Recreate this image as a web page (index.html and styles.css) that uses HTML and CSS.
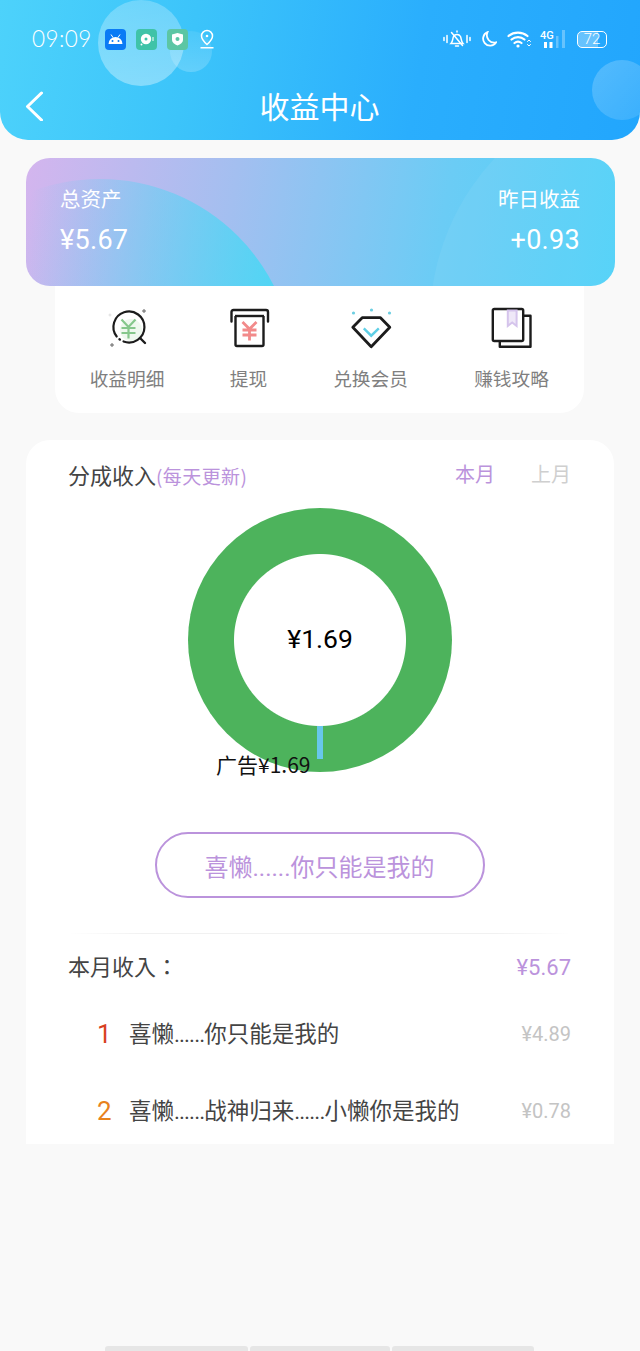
FILE: index.html
```html
<!DOCTYPE html>
<html lang="zh">
<head>
<meta charset="utf-8">
<title>收益中心</title>
<link rel="stylesheet" href="styles.css">
</head>
<body>
<div class="page">
  <header class="header">
    <span class="bubble bubble-a"></span>
    <span class="bubble bubble-b"></span>
    <span class="bubble bubble-c"></span>
    <div class="status">
      <div class="status-left">
        <span class="time">09:09</span>
        <svg class="app" viewBox="0 0 21 21"><rect width="21" height="21" rx="4" fill="#0a7bf5"/><path d="M3.500 15a7 7 0 0 1 14 0z" fill="#fff"/><path d="M6 5.500l2 3M15 5.500l-2 3" stroke="#fff" stroke-width="1"/><circle cx="7.500" cy="12" r="1" fill="#0a7bf5"/><circle cx="13.500" cy="12" r="1" fill="#0a7bf5"/></svg>
        <svg class="app" viewBox="0 0 21 21"><rect width="21" height="21" rx="4" fill="#3fc3a8"/><circle cx="10" cy="10" r="5.200" fill="#fff"/><circle cx="10" cy="10" r="1.500" fill="#3fc3a8"/><circle cx="5.500" cy="15.500" r="1" fill="#fff"/><path d="M17 8v4" stroke="#fff" stroke-width="1"/></svg>
        <svg class="app" viewBox="0 0 21 21"><rect width="21" height="21" rx="4" fill="#5cc6a4"/><path d="M10.500 4l5.500 1.500v5.500c0 2.500-2.500 4.500-5.500 5.500-3-1-5.500-3-5.500-5.500V5.500z" fill="#fff"/><circle cx="10.500" cy="10" r="2" fill="#5cc6a4"/></svg>
        <svg class="pin" viewBox="0 0 16 20" fill="none" stroke="#fff" stroke-width="1.500"><path d="M8 15.500C5 12.800 2.500 10.300 2.500 7a5.500 5.500 0 0 1 11 0c0 3.300-2.500 5.800-5.500 8.500z"/><circle cx="8" cy="7" r="1.300" fill="#fff" stroke="none"/><path d="M1.500 18.800h13"/></svg>
      </div>
      <div class="status-right">
        <svg class="s-bell" viewBox="0 0 28 18" fill="none" stroke="#fff" stroke-width="1.500" stroke-linecap="round"><path d="M8 13.500c2-2 1.500-4.500 2.500-7a4 4 0 0 1 7 0c1 2.500.5 5 2.500 7z"/><path d="M8.500 2.500l11 13"/><path d="M14 1v1M12.500 16h3M1 7.500v3M4 5.500v7M24 5.500v7M27 7.500v3"/></svg>
        <svg class="s-moon" viewBox="0 0 16 16"><path d="M6.500 1.200A7 7 0 1 0 15 11.500 7.500 7.500 0 0 1 6.500 1.200z" fill="none" stroke="#fff" stroke-width="1.800"/></svg>
        <svg class="s-wifi" viewBox="0 0 24 18" fill="none" stroke="#fff" stroke-width="2.200" stroke-linecap="round"><path d="M1.500 6a15 15 0 0 1 19 0M4.500 9.500a10 10 0 0 1 13 0M7.500 13a5.500 5.500 0 0 1 7 0"/><circle cx="11" cy="16" r="1.600" fill="#fff" stroke="none"/><path d="M20.500 11.500l1.500-1.500 1.500 1.500M20.500 14.500l1.500 1.500 1.500-1.500" stroke-width="1"/></svg>
        <div class="s-net">
          <span class="s-4g">4G</span>
          <svg class="s-bars" viewBox="0 0 26 20"><rect x="4" y="13" width="3" height="6" fill="#fff"/><rect x="9.500" y="13" width="3" height="6" fill="#fff"/><rect x="16" y="7" width="2.500" height="12" fill="#fff" fill-opacity=".3"/><rect x="22" y="1" width="3" height="18" fill="#fff" fill-opacity=".3"/></svg>
        </div>
        <div class="s-batt"><span class="s-num">72</span></div>
      </div>
    </div>
    <div class="nav">
      <svg class="back" viewBox="0 0 18 30" fill="none" stroke="#fff" stroke-width="3" stroke-linecap="round" stroke-linejoin="round"><path d="M16.500 2L2.500 15.500l14 13.500"/></svg>
      <h1 class="title">收益中心</h1>
    </div>
  </header>

  <section class="hero">
    <span class="hero-arc-a"></span>
    <span class="hero-arc-b"></span>
    <div class="hero-col">
      <span class="hero-label">总资产</span>
      <span class="hero-value">¥5.67</span>
    </div>
    <div class="hero-col hero-col-right">
      <span class="hero-label">昨日收益</span>
      <span class="hero-value">+0.93</span>
    </div>
  </section>

  <nav class="shortcuts">
    <a class="shortcut">
      <svg class="sc-icon" viewBox="0 0 44 44" fill="none"><circle cx="26" cy="23" r="11" fill="#eef8ee"/><path d="M11.700 29.500A15.500 15.500 0 1 1 18.500 34.500" stroke="#1c1c1c" stroke-width="2.200" stroke-linecap="round"/><path d="M14.500 32.300l.4.300" stroke="#1c1c1c" stroke-width="2.400" stroke-linecap="round"/><path d="M35 31l5 5" stroke="#1c1c1c" stroke-width="2.400" stroke-linecap="round"/><path d="M16.500 12.500l7 7.500 7-7.500M23.500 20v11.500M16.500 21h14M16.500 26h14" stroke="#85c78b" stroke-width="2.200"/><path d="M39 2v4M37 4h4M7 36v4M5 38h4" stroke="#666" stroke-width="1"/><path d="M5 6.500v3M3.500 8h3" stroke="#ddd" stroke-width="1"/></svg>
      <span>收益明细</span>
    </a>
    <a class="shortcut">
      <svg class="sc-icon" viewBox="0 0 44 44" fill="none"><path d="M4.500 14.500V5q0-2 2-2h32.500q2 0 2 2v9.500" stroke="#1c1c1c" stroke-width="2.400" stroke-linecap="round"/><path d="M8 9h29" stroke="#1c1c1c" stroke-width="2.400"/><path d="M8.500 9v28.500q0 1.500 1.500 1.500h25q1.500 0 1.500-1.500V9" stroke="#1c1c1c" stroke-width="2.400"/><path d="M15.500 15l7 7 7-7M22.500 22v11.500M15.500 23h14M15.500 28h14" stroke="#f28a8a" stroke-width="2.800"/></svg>
      <span>提现</span>
    </a>
    <a class="shortcut">
      <svg class="sc-icon" viewBox="0 0 44 44" fill="none"><circle cx="4.500" cy="6" r="1.600" fill="#6dcfe2"/><circle cx="22.500" cy="3" r="1.600" fill="#6dcfe2"/><circle cx="40.500" cy="6" r="1.600" fill="#6dcfe2"/><path d="M13.200 10.700h18.300l9.300 9.600L22.200 39.700 3.800 20.300z" stroke="#1c1c1c" stroke-width="2.800" stroke-linejoin="round"/><path d="M14.800 21.300l7.400 7.400 7.600-7.400" stroke="#5fcfe6" stroke-width="2.400"/></svg>
      <span>兑换会员</span>
    </a>
    <a class="shortcut">
      <svg class="sc-icon" viewBox="0 0 44 44" fill="none"><path d="M33.500 8.700h7v31H9.800V34" stroke="#1c1c1c" stroke-width="2.400" stroke-linejoin="round"/><rect x="2.800" y="2" width="30.400" height="32" rx="1.500" stroke="#1c1c1c" stroke-width="2.400"/><path d="M17.800 3.500v15.500l4.400-3.500 4.400 3.500V3.500z" fill="#efe8f8" stroke="#d5c4ec" stroke-width="2"/></svg>
      <span>赚钱攻略</span>
    </a>
  </nav>

  <main class="panel">
    <div class="panel-head">
      <div class="panel-title">分成收入<small class="panel-note">(每天更新)</small></div>
      <div class="tabs">
        <span class="tab tab-active">本月</span>
        <span class="tab">上月</span>
      </div>
    </div>
    <div class="chart">
      <div class="donut">
        <span class="tick"></span>
        <span class="donut-value">¥1.69</span>
        <span class="donut-label">广告¥1.69</span>
      </div>
    </div>
    <button class="pill">喜懒......你只能是我的</button>
    <div class="rule"></div>
    <div class="summary">
      <span class="summary-label" lang="zh-TW">本月收入：</span>
      <span class="summary-value">¥5.67</span>
    </div>
    <ul class="list">
      <li class="row">
        <span class="rank rank-1">1</span>
        <span class="row-name">喜懒<span class="dots">......</span>你只能是我的</span>
        <span class="row-price">¥4.89</span>
      </li>
      <li class="row">
        <span class="rank rank-2">2</span>
        <span class="row-name">喜懒<span class="dots">......</span>战神归来<span class="dots">......</span>小懒你是我的</span>
        <span class="row-price">¥0.78</span>
      </li>
    </ul>
  </main>

  <div class="home-bar">
    <span></span><span></span><span></span>
  </div>
</div>
</body>
</html>
```

FILE: styles.css
```css
* { box-sizing: border-box; }
html, body { margin: 0; padding: 0; }
body {
  background: #f9f9f9;
  font-family: Roboto, "Noto Sans CJK SC", sans-serif;
}
.page {
  width: 640px;
  height: 1351px;
  display: flex;
  flex-direction: column;
  overflow: hidden;
}

/* header */
.header {
  position: relative;
  height: 140px;
  flex: none;
  overflow: hidden;
  border-radius: 0 0 28px 28px;
  background: linear-gradient(100deg, #4dd2fb 0%, #3cc4fa 30%, #2aaefd 65%, #22a6fd 100%);
  color: #fff;
  padding: 0 33px 0 32px;
}
.bubble { position: absolute; border-radius: 50%; }
.bubble-a {
  left: 98px; top: 0; width: 86px; height: 86px;
  background: linear-gradient(180deg, rgba(255,255,255,.24), rgba(255,255,255,.36));
}
.bubble-b {
  left: 170px; top: 31px; width: 42px; height: 41px;
  background: linear-gradient(180deg, rgba(255,255,255,.08), rgba(255,255,255,.2));
}
.bubble-c {
  left: 592px; top: 60px; width: 60px; height: 60px;
  background: linear-gradient(135deg, rgba(255,255,255,.22), rgba(255,255,255,.1));
}
.status {
  position: relative;
  height: 80px;
  display: flex;
  justify-content: space-between;
  align-items: flex-start;
  padding-top: 28px;
}
.status-left { display: flex; align-items: center; gap: 10px; height: 22px; }
.time {
  font-family: Lato, sans-serif;
  font-weight: 300;
  font-size: 22.500px;
  line-height: 22px;
  letter-spacing: .4px;
  width: 63px;
}
.app { width: 21px; height: 21px; display: block; }
.pin { width: 16px; height: 20px; display: block; margin-left: 1px; }
.status-right { display: flex; align-items: center; height: 22px; }
.s-bell { width: 28px; height: 18px; display: block; margin-right: 10px; }
.s-moon { width: 16px; height: 16px; display: block; margin-right: 10px; }
.s-wifi { width: 24px; height: 18px; display: block; margin-right: 9px; }
.s-net { width: 26px; height: 20px; position: relative; margin-right: 11px; }
.s-4g {
  position: absolute; left: 0; top: 1px;
  font: 500 11px/11px Roboto, sans-serif;
  color: #fff;
}
.s-bars { position: absolute; left: 0; top: 0; width: 26px; height: 20px; display: block; }
.s-batt {
  width: 30px; height: 17px;
  border: 1.500px solid #fff;
  border-radius: 5px;
  display: flex; align-items: center; justify-content: center;
  background: linear-gradient(90deg, rgba(255,255,255,.3) 72%, transparent 72%);
}
.s-num { font-size: 15px; line-height: 14px; font-weight: 300; }
.nav {
  position: relative;
  height: 60px;
  display: flex;
  align-items: flex-start;
  justify-content: center;
}
.back { position: absolute; left: -7px; top: 11px; width: 18px; height: 30px; display: block; }
.title {
  margin: 0;
  font-family: "Noto Sans CJK SC", sans-serif;
  font-weight: 400;
  font-size: 30px;
  line-height: 50px;
}

/* hero */
.hero {
  position: relative;
  z-index: 1;
  flex: none;
  margin: 18px 25px 0 26px;
  height: 128px;
  border-radius: 24px;
  overflow: hidden;
  background: linear-gradient(100deg, #d4b5ee 0%, #a3bff0 35%, #6bccf5 70%, #4dd1f8 100%);
  color: #fff;
  display: flex;
  justify-content: space-between;
  padding: 26px 35px 0 34px;
}
.hero-arc-a {
  position: absolute;
  left: -121px; top: 21px;
  width: 390px; height: 390px;
  border-radius: 50%;
  background: linear-gradient(100deg, rgba(120,190,245,0) 28%, #45d8f5 95%);
}
.hero-arc-b {
  position: absolute;
  left: 404px; top: -76px;
  width: 480px; height: 480px;
  border-radius: 50%;
  background: rgba(255,255,255,.06);
}
.hero-col { position: relative; display: flex; flex-direction: column; gap: 12px; }
.hero-col-right { align-items: flex-end; }
.hero-label {
  font-family: "Noto Sans CJK SC", sans-serif;
  font-weight: 400;
  font-size: 20.500px;
  line-height: 28px;
}
.hero-value { font-size: 27px; line-height: 32px; font-weight: 400; letter-spacing: .3px; }

/* shortcuts */
.shortcuts {
  flex: none;
  margin: 0 56px 0 55px;
  height: 127px;
  background: #fff;
  border-radius: 0 0 24px 24px;
  display: grid;
  grid-template-columns: 144px 99px 145px 137px;
  padding-top: 21px;
}
.shortcut {
  display: flex;
  flex-direction: column;
  align-items: center;
  gap: 14px;
  font-family: "Noto Sans CJK SC", sans-serif;
  font-size: 18.700px;
  line-height: 26px;
  color: #7f7f7f;
}
.sc-icon { width: 44px; height: 44px; display: block; }

/* panel */
.panel {
  flex: none;
  margin: 27px 26px 0;
  height: 704px;
  background: #fff;
  border-radius: 24px 24px 0 0;
  padding: 0 43px 0 42px;
  overflow: hidden;
  font-family: "Noto Sans CJK SC", sans-serif;
}
.panel-head {
  display: flex;
  justify-content: space-between;
  align-items: flex-start;
  height: 68px;
  padding-top: 17px;
}
.panel-title { font-size: 22px; line-height: 34px; color: #444; font-weight: 400; white-space: nowrap; }
.panel-note { font-size: 19px; letter-spacing: .4px; color: #bb93dc; }
.tabs { display: flex; gap: 36px; margin-top: 2px; }
.tab { font-size: 20px; line-height: 30px; color: #cfcfcf; }
.tab-active { color: #bb93dc; }
.chart { height: 264px; margin: 0 -43px 0 -42px; display: flex; justify-content: center; }
.donut {
  position: relative;
  width: 264px; height: 264px;
  border-radius: 50%;
  background: radial-gradient(circle closest-side, #fff 0, #fff 85.500px, #4db35c 86.500px);
}
.tick {
  position: absolute;
  left: 129px; top: 218px;
  width: 6px; height: 33px;
  background: #68c7ea;
}
.donut-value {
  position: absolute;
  left: 0; right: 0; top: 113px;
  text-align: center;
  font-family: Roboto, sans-serif;
  font-size: 26.500px;
  line-height: 36px;
  color: #000;
}
.donut-label {
  position: absolute;
  left: 28px; top: 241px;
  white-space: nowrap;
  font-size: 21px;
  line-height: 30px;
  color: #111;
}
.pill {
  display: block;
  margin: 60px auto 0;
  width: 330px; height: 66px;
  background: #fff;
  border: 2px solid #bb93dc;
  border-radius: 33px;
  font-family: Roboto, "Noto Sans CJK SC", sans-serif;
  font-size: 24px;
  color: #bb93dc;
  padding: 0;
}
.rule {
  height: 1px;
  margin: 35px 0 0;
  background: linear-gradient(90deg, transparent, #f1f1f1 15%, #f1f1f1 85%, transparent);
}
.summary {
  display: flex;
  justify-content: space-between;
  align-items: center;
  height: 66px;
}
.summary-label {
  font-family: "Noto Sans CJK TC", sans-serif;
  font-size: 22px;
  color: #444;
  line-height: 32px;
  margin-top: -4px;
}
.summary-value { font-family: Roboto, sans-serif; font-size: 22px; color: #bb93dc; }
.list { list-style: none; margin: -5px 0 0; padding: 0; }
.row {
  display: flex;
  align-items: center;
  height: 77px;
}
.rank {
  width: 61px;
  padding-left: 29px;
  font-family: Roboto, sans-serif;
  font-size: 26px;
}
.rank-1 { color: #d8401f; }
.rank-2 { color: #e8821e; }
.row-name {
  flex: 1;
  font-family: Roboto, "Noto Sans CJK SC", sans-serif;
  font-size: 22.500px;
  line-height: 32px;
  color: #444;
}
.dots { letter-spacing: -.9px; }
.row-price { font-family: Roboto, sans-serif; font-size: 20px; color: #c4c4c4; }

/* home bar */
.home-bar {
  margin-top: auto;
  align-self: center;
  display: grid;
  grid-template-columns: 143px 140px 142px;
  gap: 2px;
  height: 5px;
  margin-left: -1px;
}
.home-bar span {
  background: #e6e6e6;
  border-radius: 3px 3px 0 0;
}
```
